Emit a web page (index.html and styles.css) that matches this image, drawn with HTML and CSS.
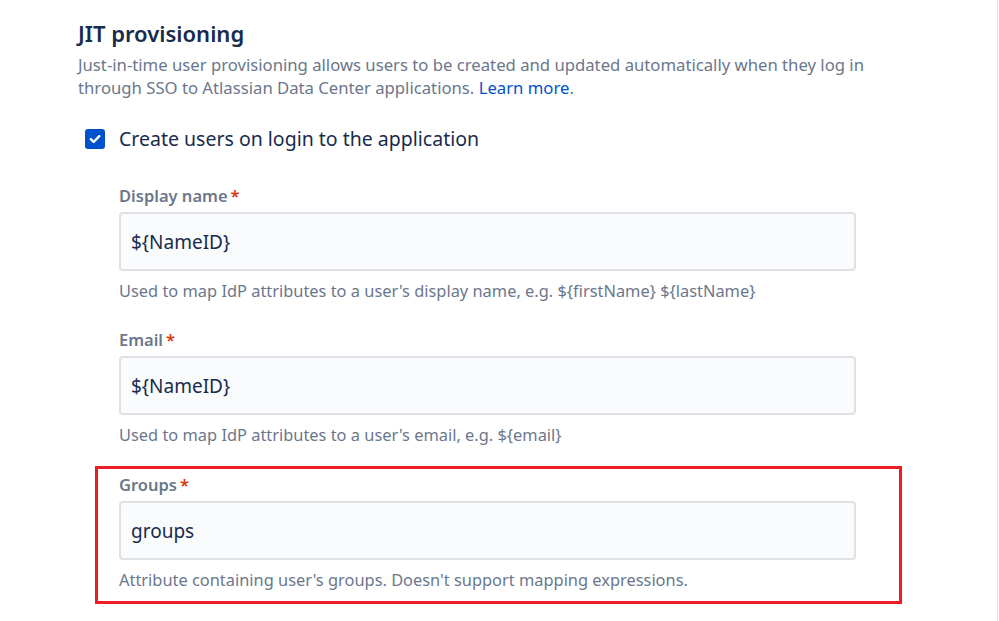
FILE: index.html
```html
<!DOCTYPE html>
<html lang="en">
<head>
<meta charset="utf-8">
<title>JIT provisioning</title>
<link rel="stylesheet" href="styles.css">
</head>
<body>
<div class="page">
  <section class="section">
    <h2 class="title">JIT provisioning</h2>
    <p class="desc">Just-in-time user provisioning allows users to be created and updated automatically when they log in<br>through SSO to Atlassian Data Center applications. <a class="link" href="#">Learn more</a>.</p>

    <label class="check-row">
      <span class="checkbox">
        <svg viewBox="0 0 20 20" width="20" height="20" aria-hidden="true">
          <rect x="0" y="0" width="20" height="20" rx="3" fill="#0052cc"/>
          <path d="M5.8 10.2 L8.7 13 L14.3 7.2" fill="none" stroke="#fff" stroke-width="2.4" stroke-linecap="round" stroke-linejoin="round"/>
        </svg>
      </span>
      <span class="check-label">Create users on login to the application</span>
    </label>

    <div class="fields">
      <div class="field">
        <div class="label">Display name<span class="req">*</span></div>
        <div class="input">${NameID}</div>
        <div class="help">Used to map IdP attributes to a user's display name, e.g. ${firstName} ${lastName}</div>
      </div>
      <div class="field">
        <div class="label">Email<span class="req">*</span></div>
        <div class="input">${NameID}</div>
        <div class="help">Used to map IdP attributes to a user's email, e.g. ${email}</div>
      </div>
      <div class="highlight">
        <div class="field">
          <div class="label">Groups<span class="req">*</span></div>
          <div class="input">groups</div>
          <div class="help">Attribute containing user's groups. Doesn't support mapping expressions.</div>
        </div>
      </div>
    </div>
  </section>
</div>
</body>
</html>
```
FILE: styles.css
```css
html, body {
  margin: 0;
  padding: 0;
  background: #ffffff;
}
body {
  font-family: "Noto Sans", "Open Sans", "Liberation Sans", sans-serif;
  color: #172b4d;
}
.page {
  min-height: 621px;
  width: 998px;
  border-right: 1px solid #e4e4e4;
  box-sizing: border-box;
}
.section {
  padding: 19px 0 0 78px;
}
.title {
  margin: 0;
  font-size: 22px;
  line-height: 28px;
  font-weight: 600;
  color: #172b4d;
}
.desc {
  margin: 6px 0 0;
  font-size: 16.7px;
  line-height: 23px;
  color: #6b778c;
}
.link {
  color: #0052cc;
  text-decoration: none;
}
.check-row {
  display: flex;
  align-items: center;
  gap: 14px;
  margin: 30px 0 0 7px;
  height: 20px;
}
.checkbox {
  display: block;
  width: 20px;
  height: 20px;
}
.checkbox svg { display: block; }
.check-label {
  font-size: 19.5px;
  line-height: 26px;
  color: #172b4d;
}
.fields {
  margin: 36px 0 0 41px;
  width: 737px;
}
.field {
  width: 737px;
}
.field + .field {
  margin-top: 27px;
}
.label {
  font-size: 16.5px;
  line-height: 22px;
  font-weight: 600;
  color: #6b778c;
}
.req {
  color: #de350b;
  margin-left: 3px;
}
.input {
  margin-top: 5px;
  height: 59px;
  box-sizing: border-box;
  border: 2px solid #dfe1e6;
  border-radius: 4px;
  background: #fafbfc;
  padding: 0 10px;
  display: flex;
  align-items: center;
  font-size: 19px;
  color: #172b4d;
}
.help {
  margin-top: 9px;
  font-size: 16.4px;
  line-height: 22px;
  color: #6b778c;
}
.highlight {
  margin: 20px 0 0 -24px;
  width: 807px;
  box-sizing: border-box;
  border: 3px solid #ee1c25;
  padding: 5px 21px 10px;
}
```
